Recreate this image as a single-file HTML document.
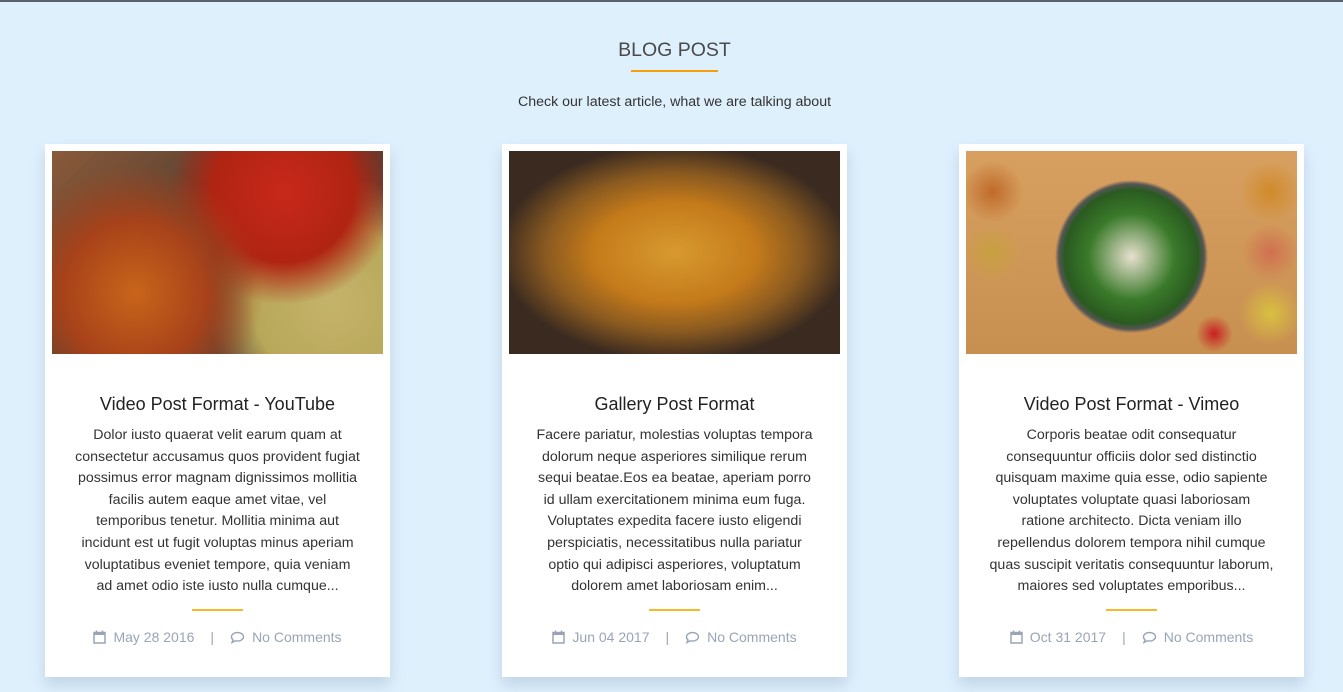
<!DOCTYPE html>
<html><head><meta charset="utf-8"><style>
*{margin:0;padding:0;box-sizing:border-box}
body{width:1343px;height:692px;overflow:hidden;background:#dff0fd;font-family:"Liberation Sans",sans-serif;position:relative}
.top{position:absolute;top:0;left:0;width:1343px;height:2px;background:#5a6168}
h2{position:absolute;top:39px;left:0;width:1349px;text-align:center;font-size:19.5px;font-weight:normal;color:#4a4a4a}
.ul{position:absolute;top:70px;left:631px;width:87px;height:2px;background:#f5a00a}
.sub{position:absolute;top:94px;left:0;width:1349px;text-align:center;font-size:14.2px;color:#333}
.card{position:absolute;top:144px;width:345px;height:533px;background:#fff;box-shadow:0 8px 14px rgba(120,150,180,.3)}
.img{position:absolute;left:7px;top:7px;width:331px;height:203px}
.t{position:absolute;top:250px;left:0;width:345px;text-align:center;font-size:18px;color:#222}
.p{position:absolute;top:281px;left:30px;width:285px;text-align:center;font-size:14.2px;line-height:21.6px;color:#333}
.p.n{left:0;width:345px;white-space:nowrap}
.d{position:absolute;top:465px;left:147px;width:51px;height:2px;background:#f7b928}
.m{position:absolute;top:485px;left:0;width:345px;text-align:center;font-size:14px;color:#9aa4b8;white-space:nowrap}
.m svg{vertical-align:-2px;margin-right:7px}
.sep{margin:0 16px}
</style></head><body>
<div class="top"></div>
<h2>BLOG POST</h2><div class="ul"></div>
<div class="sub">Check our latest article, what we are talking about</div>

<div class="card" style="left:45px">
<div class="img" style="background:radial-gradient(circle at 25% 70%,#c8651a 0,#a8421a 25%,transparent 45%),radial-gradient(circle at 70% 20%,#c8281a 0,#b02412 25%,transparent 40%),radial-gradient(circle at 85% 75%,#c4b36a 0,#b8a85a 25%,transparent 40%),linear-gradient(135deg,#8a5a3a,#4a3a30 50%,#6a5040)"></div>
<div class="t">Video Post Format - YouTube</div>
<div class="p">Dolor iusto quaerat velit earum quam at consectetur accusamus quos provident fugiat possimus error magnam dignissimos mollitia facilis autem eaque amet vitae, vel temporibus tenetur. Mollitia minima aut incidunt est ut fugit voluptas minus aperiam voluptatibus eveniet tempore, quia veniam ad amet odio iste iusto nulla cumque...</div>
<div class="d"></div>
<div class="m"><svg width="13" height="14" viewBox="0 0 13 14"><rect x="1" y="2.5" width="11" height="10.5" fill="none" stroke="#9aa4b8" stroke-width="1.5"/><rect x="1" y="2.5" width="11" height="2.5" fill="#9aa4b8"/><path d="M3.5 0.5v3M9.5 0.5v3" stroke="#9aa4b8" stroke-width="1.5"/></svg>May 28 2016<span class="sep">|</span><svg width="15" height="13" viewBox="0 0 15 13"><path d="M7.5 1.5c3.3 0 6 1.9 6 4.3s-2.7 4.3-6 4.3c-.8 0-1.5-.1-2.2-.3L2 11.5l1-2.6C1.9 8.1 1.5 7 1.5 5.8c0-2.4 2.7-4.3 6-4.3z" fill="none" stroke="#9aa4b8" stroke-width="1.4"/></svg>No Comments</div>
</div>

<div class="card" style="left:502px">
<div class="img" style="background:radial-gradient(ellipse at 50% 50%,#d89a30 0,#c47a1a 35%,#8a5a20 55%,#3a2a20 75%),#2a2018"></div>
<div class="t">Gallery Post Format</div>
<div class="p">Facere pariatur, molestias voluptas tempora dolorum neque asperiores similique rerum sequi beatae.Eos ea beatae, aperiam porro id ullam exercitationem minima eum fuga. Voluptates expedita facere iusto eligendi perspiciatis, necessitatibus nulla pariatur optio qui adipisci asperiores, voluptatum dolorem amet laboriosam enim...</div>
<div class="d"></div>
<div class="m"><svg width="13" height="14" viewBox="0 0 13 14"><rect x="1" y="2.5" width="11" height="10.5" fill="none" stroke="#9aa4b8" stroke-width="1.5"/><rect x="1" y="2.5" width="11" height="2.5" fill="#9aa4b8"/><path d="M3.5 0.5v3M9.5 0.5v3" stroke="#9aa4b8" stroke-width="1.5"/></svg>Jun 04 2017<span class="sep">|</span><svg width="15" height="13" viewBox="0 0 15 13"><path d="M7.5 1.5c3.3 0 6 1.9 6 4.3s-2.7 4.3-6 4.3c-.8 0-1.5-.1-2.2-.3L2 11.5l1-2.6C1.9 8.1 1.5 7 1.5 5.8c0-2.4 2.7-4.3 6-4.3z" fill="none" stroke="#9aa4b8" stroke-width="1.4"/></svg>No Comments</div>
</div>

<div class="card" style="left:959px">
<div class="img" style="background:radial-gradient(circle at 50% 52%,#e8e0d0 0,#3a7a2a 22%,#2a5a20 34%,#555 37%,transparent 39%),radial-gradient(circle at 8% 20%,#c06a2a 0,transparent 9%),radial-gradient(circle at 92% 20%,#d08a2a 0,transparent 9%),radial-gradient(circle at 8% 50%,#c8a040 0,transparent 9%),radial-gradient(circle at 92% 50%,#d07050 0,transparent 9%),radial-gradient(circle at 92% 80%,#d8c040 0,transparent 9%),radial-gradient(circle at 75% 90%,#c82020 0,transparent 6%),linear-gradient(#d8a060,#c89050)"></div>
<div class="t">Video Post Format - Vimeo</div>
<div class="p n">Corporis beatae odit consequatur<br>consequuntur officiis dolor sed distinctio<br>quisquam maxime quia esse, odio sapiente<br>voluptates voluptate quasi laboriosam<br>ratione architecto. Dicta veniam illo<br>repellendus dolorem tempora nihil cumque<br>quas suscipit veritatis consequuntur laborum,<br>maiores sed voluptates emporibus...</div>
<div class="d"></div>
<div class="m"><svg width="13" height="14" viewBox="0 0 13 14"><rect x="1" y="2.5" width="11" height="10.5" fill="none" stroke="#9aa4b8" stroke-width="1.5"/><rect x="1" y="2.5" width="11" height="2.5" fill="#9aa4b8"/><path d="M3.5 0.5v3M9.5 0.5v3" stroke="#9aa4b8" stroke-width="1.5"/></svg>Oct 31 2017<span class="sep">|</span><svg width="15" height="13" viewBox="0 0 15 13"><path d="M7.5 1.5c3.3 0 6 1.9 6 4.3s-2.7 4.3-6 4.3c-.8 0-1.5-.1-2.2-.3L2 11.5l1-2.6C1.9 8.1 1.5 7 1.5 5.8c0-2.4 2.7-4.3 6-4.3z" fill="none" stroke="#9aa4b8" stroke-width="1.4"/></svg>No Comments</div>
</div>
</body></html>
